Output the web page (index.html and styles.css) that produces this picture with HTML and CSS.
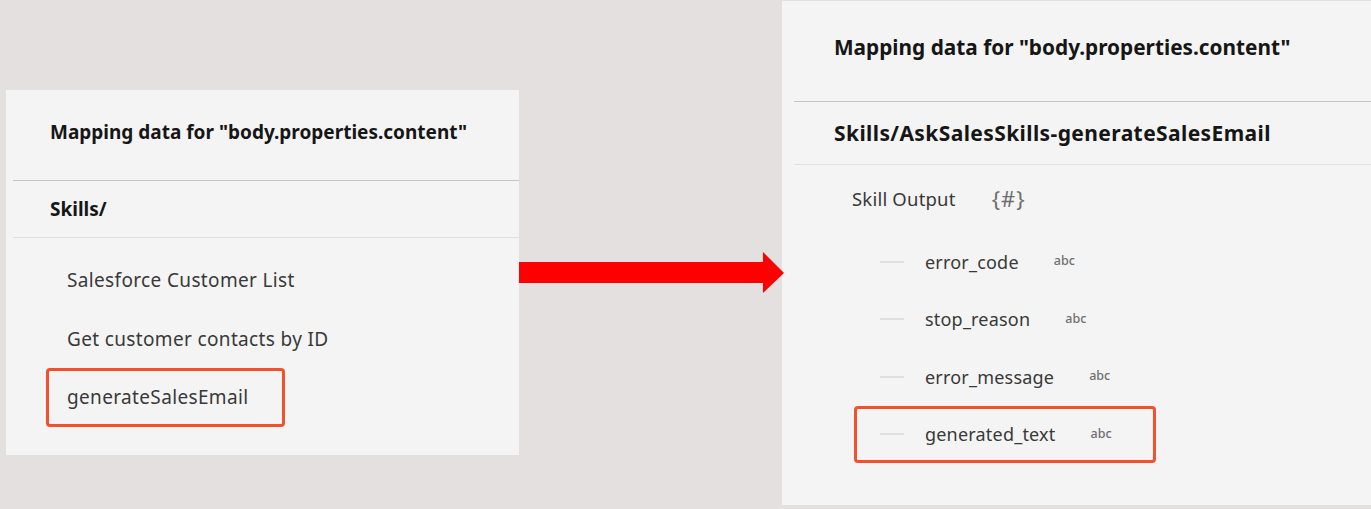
FILE: index.html
```html
<!DOCTYPE html>
<html lang="en">
<head>
<meta charset="utf-8">
<title>Mapping data</title>
<link rel="stylesheet" href="styles.css">
</head>
<body>
<div class="stage">
  <section class="panel panel-left">
    <div class="inner">
      <header class="head"><h2 class="title">Mapping data for "body.properties.content"</h2></header>
      <div class="crumb">Skills/</div>
      <ul class="list">
        <li class="item">Salesforce Customer List</li>
        <li class="item">Get customer contacts by ID</li>
        <li class="item item-hl">generateSalesEmail</li>
      </ul>
    </div>
  </section>

  <svg class="arrow" width="265" height="42" viewBox="0 0 265 42" aria-hidden="true">
    <polygon points="0,10 244,10 244,0 265,21 244,41 244,31 0,31" fill="#ff0000"/>
  </svg>

  <section class="panel panel-right">
    <div class="inner">
      <header class="head"><h2 class="title">Mapping data for "body.properties.content"</h2></header>
      <div class="crumb">Skills/AskSalesSkills-generateSalesEmail</div>
      <div class="output-row">
        <span class="output-label">Skill Output</span>
        <span class="obj-icon">{#}</span>
      </div>
      <ul class="fields">
        <li class="field"><span class="dash"></span><span class="fname">error_code</span><span class="type">abc</span></li>
        <li class="field"><span class="dash"></span><span class="fname">stop_reason</span><span class="type">abc</span></li>
        <li class="field"><span class="dash"></span><span class="fname">error_message</span><span class="type">abc</span></li>
        <li class="field field-hl"><span class="dash"></span><span class="fname">generated_text</span><span class="type">abc</span></li>
      </ul>
    </div>
  </section>
</div>
</body>
</html>
```

FILE: styles.css
```css
* { box-sizing: border-box; }
html, body { margin: 0; padding: 0; }
body {
  background: #e5e0e0;
  font-family: "Noto Sans", "Open Sans", sans-serif;
  color: #161616;
  width: 1371px;
  height: 509px;
  overflow: hidden;
}
.stage {
  display: flex;
  align-items: flex-start;
}
.panel {
  background: #f4f4f4;
}
.panel-left {
  margin-left: 6px;
  margin-top: 90px;
  width: 513px;
  height: 365px;
}
.panel-left .inner { margin-left: 7px; }
.panel-left .head {
  height: 91px;
  border-bottom: 1px solid #c6c6c6;
  padding: 28px 0 0 37px;
}
.title {
  margin: 0;
  font-size: 19px;
  font-weight: 700;
  line-height: 28px;
  color: #161616;
  white-space: nowrap;
}
.crumb {
  display: flex;
  align-items: center;
  font-weight: 700;
  color: #161616;
  border-bottom: 1px solid #e0e0e0;
  white-space: nowrap;
}
.panel-left .crumb {
  height: 57px;
  padding-left: 37px;
  font-size: 19px;
}
.list {
  list-style: none;
  margin: 0;
  padding: 13px 0 0 33px;
}
.item {
  display: flex;
  align-items: center;
  width: max-content;
  height: 58.5px;
  padding-left: 18px;
  border: 3px solid transparent;
  border-radius: 4px;
  font-size: 19px;
  color: #393939;
  letter-spacing: 0.35px;
  white-space: nowrap;
}
.item-hl {
  width: 239px;
  border-color: #f4502e;
}

.arrow {
  flex: none;
  margin-top: 252px;
  margin-right: -2px;
  position: relative;
  z-index: 1;
}

.panel-right {
  margin-top: 1px;
  width: 589px;
  height: 504px;
}
.panel-right .inner { margin-left: 12px; }
.panel-right .head {
  height: 101px;
  border-bottom: 1px solid #c6c6c6;
  padding: 31px 0 0 40px;
}
.panel-right .title {
  font-size: 20.8px;
  line-height: 30px;
}
.panel-right .crumb {
  height: 63px;
  padding-left: 40px;
  font-size: 21px;
  letter-spacing: 0.4px;
}
.output-row {
  display: flex;
  align-items: center;
  height: 68px;
  padding-left: 58px;
  padding-bottom: 2px;
}
.output-label {
  font-size: 18.5px;
  color: #393939;
  letter-spacing: 0.2px;
}
.obj-icon {
  margin-left: 36px;
  font-size: 22px;
  color: #6f6f6f;
  letter-spacing: 1px;
  line-height: 1;
}
.fields {
  list-style: none;
  margin: 0;
  padding: 0 0 0 60px;
}
.field {
  display: flex;
  align-items: center;
  width: 302px;
  height: 57.5px;
  padding-left: 23px;
  border: 3px solid transparent;
  border-radius: 4px;
}
.field-hl { border-color: #f4502e; }
.dash {
  width: 24px;
  height: 2px;
  background: #e0e0e0;
  margin-right: 21px;
  flex: none;
}
.fname {
  font-size: 18px;
  color: #393939;
  letter-spacing: 0.2px;
  white-space: nowrap;
}
.type {
  margin-left: 35px;
  font-size: 12.5px;
  font-weight: 500;
  color: #6f6f6f;
  position: relative;
  top: -1px;
}
```
